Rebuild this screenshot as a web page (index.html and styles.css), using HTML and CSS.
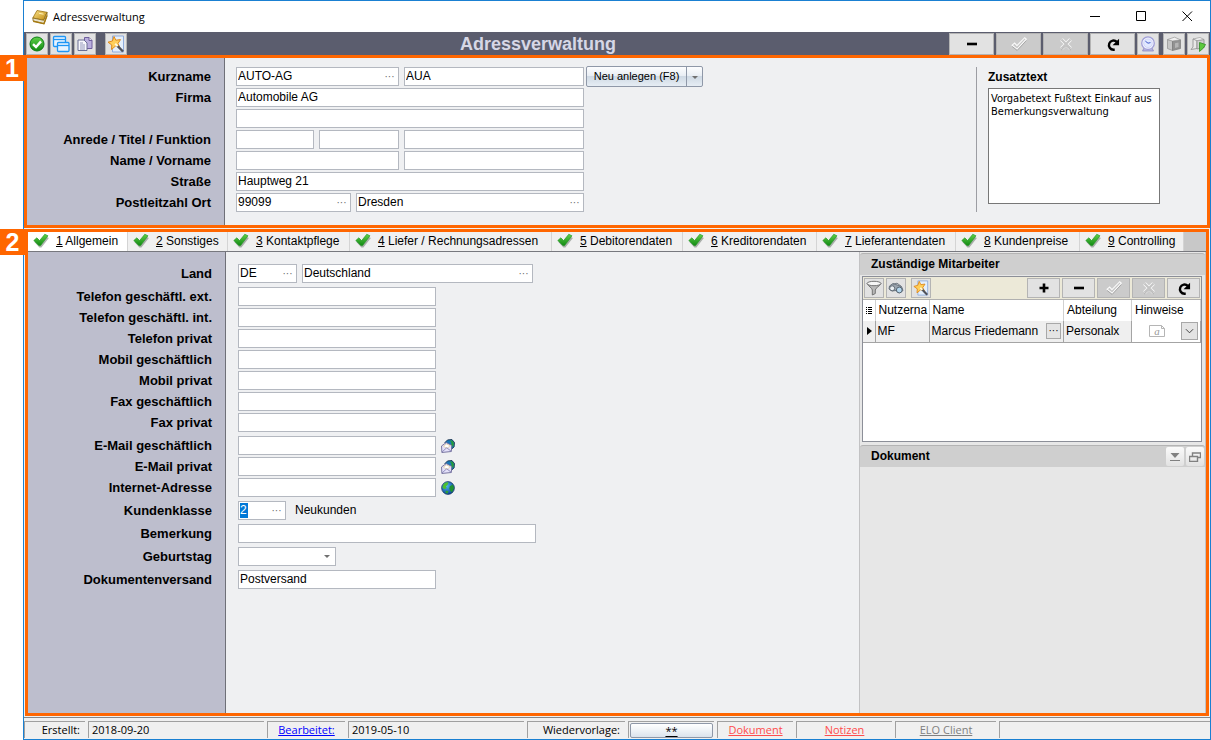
FILE: index.html
```html
<!DOCTYPE html>
<html lang="de">
<head>
<meta charset="utf-8">
<title>Adressverwaltung</title>
<link rel="stylesheet" href="styles.css">
</head>
<body>
<svg class="sprite" aria-hidden="true">
  <defs>
    <linearGradient id="g-green" x1="0" y1="0" x2="0" y2="1"><stop offset="0" stop-color="#5fd04a"/><stop offset="1" stop-color="#128a12"/></linearGradient>
    <linearGradient id="g-gold" x1="0" y1="0" x2="1" y2="1"><stop offset="0" stop-color="#fbe38a"/><stop offset="1" stop-color="#c08a10"/></linearGradient>
    <radialGradient id="g-globe" cx=".4" cy=".35" r=".7"><stop offset="0" stop-color="#4db4f0"/><stop offset="1" stop-color="#0a3f94"/></radialGradient>
  </defs>
  <symbol id="i-check" viewBox="0 0 16 16"><path d="M1 8 4.500 5.500 7 8.500 12 2.300 15.500 4 8 13.500 6 13.500Z" fill="#707870" opacity=".55" transform="translate(.4 1)"/><path d="M.8 7.500 3.800 4.800 6.600 7.600 11.800 1.200 15 2.800 7.600 12.600 5.800 12.600Z" fill="url(#g-green)" stroke="#1c9420" stroke-width=".6"/></symbol>
  <symbol id="i-ok" viewBox="0 0 16 16"><circle cx="8" cy="8" r="7" fill="url(#g-green)" stroke="#0d7d16"/><path d="M4 8.200 7 11 12 5.400" fill="none" stroke="#fff" stroke-width="2.400"/></symbol>
  <symbol id="i-windows" viewBox="0 0 18 18"><g fill="#e8f4ff" stroke="#1e96f5" stroke-width="1.300"><rect x="1.500" y="1.500" width="12" height="10" rx="1"/><path d="M1.500 4.500h12"/><rect x="5.500" y="7.500" width="11.500" height="9" rx="1"/><path d="M5.500 10.500h11.500"/></g></symbol>
  <symbol id="i-docs" viewBox="0 0 16 16"><path d="M7.500 1.500h4.500l3 3v8H7.500z" fill="#b9aede" stroke="#6e5f9c"/><path d="M12 1.500v3h3" fill="#eee" stroke="#6e5f9c"/><path d="M1 4h6l3 3v7.500H1z" fill="#f7f7fc" stroke="#6a6f94"/><path d="M3 7h3M3 9h5M3 11h5M3 13h5" stroke="#7d84ac" stroke-width=".8"/></symbol>
  <symbol id="i-wizard" viewBox="0 0 18 18"><path d="M5.500 1h11v16h-11z" fill="#e4effc" stroke="#8fabdc"/><path d="M7 1.500 8.800 5.200 13.500 4.600 11 8.500 13 12.500 8.600 11 4.500 14.500 4.800 10 1 7.200 5.400 6Z" fill="#ffcf5a" stroke="#e08a1c"/><path d="M10 10.500 16 16.500" stroke="#50525a" stroke-width="2.400"/><path d="M8.200 8.800 10.600 11.200" stroke="#fff8dc" stroke-width="2"/></symbol>
  <symbol id="i-book" viewBox="0 0 16 16"><path d="M.8 9 5 1.500 15 3.300 11.700 11.300Z" fill="url(#g-gold)" stroke="#9a7212" stroke-width=".8"/><path d="M.8 9 11.700 11.300 15 3.300V6.500L12 14.800 1.200 12Z" fill="#e9e3cc" stroke="#86640e" stroke-width=".8"/><path d="M1.200 12.200 12 14.600 15 6.500" fill="none" stroke="#a67a10" stroke-width="1.400"/><path d="M7 4.300 11.500 5.200" stroke="#fff3b8"/></symbol>
  <symbol id="i-minus" viewBox="0 0 12 12"><path d="M1 6h10" stroke="#000" stroke-width="2.600"/></symbol>
  <symbol id="i-plus" viewBox="0 0 12 12"><path d="M1.500 6h9M6 1.500v9" stroke="#000" stroke-width="2.600"/></symbol>
  <symbol id="i-tick" viewBox="0 0 14 14"><path d="M1 8 3.200 6.200 5.200 8.400 12 1.500 13.400 2.800 5.400 11.500Z" fill="#c6c6c6" stroke="#fafafa"/><path d="M1 9.200 5.400 12.600 13.400 4" fill="none" stroke="#9c9c9c" stroke-width=".7"/></symbol>
  <symbol id="i-cross" viewBox="0 0 14 14"><path d="M2.500 2.500 11.500 11.500M11.500 2.500 2.500 11.500" stroke="#fafafa" stroke-width="3.800"/><path d="M2.500 2.500 11.500 11.500M11.500 2.500 2.500 11.500" stroke="#c4c4c4" stroke-width="2.200"/><path d="M2 13.200 7 9 12 13.200" stroke="#a2a2a2" stroke-width=".6" fill="none"/></symbol>
  <symbol id="i-redo" viewBox="0 0 14 14"><path d="M8.500 12H7.500A4 4 0 1 1 10.300 5.200" fill="none" stroke="#000" stroke-width="2.100"/><path d="M12.300 2.500v5.700H6.600Z" fill="#000"/></symbol>
  <symbol id="i-clock" viewBox="0 0 16 16"><path d="M4 12 2.500 15h11L12 12Z" fill="#b6b4dc" stroke="#8380bd" stroke-width=".7"/><circle cx="8" cy="7.200" r="6.300" fill="#f1f4ff" stroke="#a19fd8" stroke-width="1.300"/><circle cx="8" cy="7.200" r="4.300" fill="#e2e9ff" stroke="#c3c6ee" stroke-width=".6"/><path d="M5.400 5.200 8 7.200 10.500 6.600" stroke="#3f58c8" fill="none"/></symbol>
  <symbol id="i-box" viewBox="0 0 16 16"><path d="M1.500 3.500 6.500 5v9.500L1.500 12.500Z" fill="#c6c6c6" stroke="#8c8c8c" stroke-width=".7"/><path d="M6.500 5 14.500 3.800v8.700L6.500 14.500Z" fill="#929292" stroke="#7a7a7a" stroke-width=".7"/><path d="M1.500 3.500 8.500 1.200 14.500 3.800 6.500 5Z" fill="#f0f0f0" stroke="#999" stroke-width=".7"/><path d="M9 7.200 12.500 6.500v4.500L9 12z" fill="#b5b5b5"/></symbol>
  <symbol id="i-boxgo" viewBox="0 0 16 16"><path d="M3 3 7 4.500v8L1 13.500 3 11Z" fill="#e8e8e8" stroke="#8c8c8c" stroke-width=".8"/><path d="M7 4.500 14 3.500v8L7 13Z" fill="#d0d0d0" stroke="#8c8c8c" stroke-width=".8"/><path d="M3 3 10 1.500 14 3.500 7 4.500Z" fill="#f5f5f5" stroke="#999" stroke-width=".7"/><path d="M9.500 6.500 15.500 8.500 13.500 12 9.500 15.500Z" fill="#5cc93e" stroke="#2d8a22" stroke-width=".8"/></symbol>
  <symbol id="i-globe" viewBox="0 0 16 16"><circle cx="8" cy="8" r="7.300" fill="url(#g-globe)" stroke="#0b2c5c" stroke-width=".8"/><path d="M2.500 4.500C4 2 6.500 1.200 8.500 1.600L7.500 4.500 5.500 6 6.500 8 4 9.500 1.500 7.500Z" fill="#4cbf30"/><path d="M10 6 13.500 4 15 8 12.500 13 10.500 11 9.500 8.500Z" fill="#1f9133"/><path d="M5.500 11 8.500 11.500 7.500 14.500 5 13.500Z" fill="#2f9f38"/></symbol>
  <symbol id="i-mail" viewBox="0 0 16 16"><path d="M4.500 4 7.500 1 12.500.6 15.400 4 15 9 11 12.500Z" fill="#1877b8" stroke="#0a2440" stroke-width=".9"/><path d="M10 1.500 13 2 14.800 4.500 14 9 11.500 7 12 4.500Z" fill="#259a3c"/><path d="M.6 8 6 4 12.300 7.300 11.800 14.300 1 15.400Z" fill="#e4e1fa" stroke="#6a6796"/><path d="M2.800 8.200 6.300 5.700 10.600 7.800 6.800 10.600Z" fill="#fff" stroke="#dcc27c" stroke-width=".6"/><path d="M1 15 6.500 10 11.700 14" fill="none" stroke="#8582b4"/></symbol>
  <symbol id="i-funnel" viewBox="0 0 16 16"><path d="M1 3.500C2 6 6.300 8 6.300 10V15L9.300 13.500V10C9.300 8 14 6 15 3.500Z" fill="#b8b8b8" stroke="#6a6a6a" stroke-width=".9"/><ellipse cx="8" cy="3.500" rx="7" ry="2.200" fill="#f6f6f6" stroke="#777"/></symbol>
  <symbol id="i-binocular" viewBox="0 0 16 16"><path d="M1.500 6 5 3.500 13.500 6.500 15 10.500 11 13 8 10.500 4 11 1 9Z" fill="#9aa4ae" stroke="#626c76" stroke-width=".9"/><circle cx="4.200" cy="8.300" r="2.500" fill="#e9eef2" stroke="#606a74"/><circle cx="11.300" cy="10" r="2.900" fill="#b4d7ee" stroke="#55636f"/><path d="M5 4.200 9 3.200 13.500 6.500" fill="none" stroke="#737c86"/></symbol>
  <symbol id="i-note" viewBox="0 0 16 14"><path d="M.5 1.500h12l3 3v8H.5z" fill="#fff" stroke="#b5b5b5"/><path d="M12.500 1.500v3h3" fill="none" stroke="#b5b5b5"/></symbol>
</svg>

<div class="page">
<main class="window">
  <header class="titlebar">
    <svg class="icon"><use href="#i-book"/></svg>
    <span class="caption">Adressverwaltung</span>
    <button class="winbtn" aria-label="Minimieren"><svg class="glyph" viewBox="0 0 11 11"><path d="M0 5.500h10"/></svg></button>
    <button class="winbtn" aria-label="Maximieren"><svg class="glyph" viewBox="0 0 11 11"><path d="M.5 .5h9v9h-9z"/></svg></button>
    <button class="winbtn" aria-label="Schließen"><svg class="glyph" viewBox="0 0 11 11"><path d="M.5 .5 10 10M10 .5 .5 10"/></svg></button>
  </header>

  <div class="toolbar">
    <div class="group">
      <button class="tool" aria-label="Übernehmen"><svg class="icon"><use href="#i-ok"/></svg></button>
      <button class="tool" aria-label="Fenster"><svg class="icon large"><use href="#i-windows"/></svg></button>
      <button class="tool" aria-label="Kopieren"><svg class="icon"><use href="#i-docs"/></svg></button>
    </div>
    <div class="group apart"><button class="tool" aria-label="Assistent"><svg class="icon large"><use href="#i-wizard"/></svg></button></div>
    <h1 class="heading">Adressverwaltung</h1>
    <div class="group">
      <button class="tool wide" aria-label="Löschen"><svg class="icon small"><use href="#i-minus"/></svg></button>
      <button class="tool wide" disabled aria-label="Speichern"><svg class="icon"><use href="#i-tick"/></svg></button>
      <button class="tool wide" disabled aria-label="Verwerfen"><svg class="icon medium"><use href="#i-cross"/></svg></button>
      <button class="tool wide" aria-label="Aktualisieren"><svg class="icon"><use href="#i-redo"/></svg></button>
      <button class="tool" aria-label="Wiedervorlage"><svg class="icon"><use href="#i-clock"/></svg></button>
    </div>
    <div class="group">
      <button class="tool" aria-label="Archiv"><svg class="icon"><use href="#i-box"/></svg></button>
      <button class="tool" aria-label="Archiv starten"><svg class="icon"><use href="#i-boxgo"/></svg></button>
    </div>
  </div>

  <section class="frame master">
    <span class="badge">1</span>
    <form class="form">
      <div class="row"><label for="kurz">Kurzname</label>
        <span class="field w163"><input id="kurz" value="AUTO-AG"><button type="button" class="lookup" aria-label="Auswahl">···</button></span>
        <span class="field w180"><input aria-label="Kürzel" value="AUA"></span>
        <span class="split"><button type="button" class="main">Neu anlegen (F8)</button><button type="button" class="drop" aria-label="Mehr"><i class="arrow"></i></button></span></div>
      <div class="row"><label for="firma">Firma</label><span class="field w348"><input id="firma" value="Automobile AG"></span></div>
      <div class="row"><label for="firma2"></label><span class="field w348"><input id="firma2" aria-label="Firma Zusatz"></span></div>
      <div class="row"><label for="anrede">Anrede / Titel / Funktion</label><span class="field w78"><input id="anrede"></span><span class="field w80"><input aria-label="Titel"></span><span class="field w180"><input aria-label="Funktion"></span></div>
      <div class="row"><label for="name">Name / Vorname</label><span class="field w163"><input id="name"></span><span class="field w180"><input aria-label="Vorname"></span></div>
      <div class="row"><label for="str">Straße</label><span class="field w348"><input id="str" value="Hauptweg 21"></span></div>
      <div class="row"><label for="plz">Postleitzahl Ort</label><span class="field w115"><input id="plz" value="99099"><button type="button" class="lookup" aria-label="Auswahl">···</button></span><span class="field w228"><input aria-label="Ort" value="Dresden"><button type="button" class="lookup" aria-label="Auswahl">···</button></span></div>
    </form>
    <aside class="extra">
      <label for="zusatz">Zusatztext</label>
      <textarea id="zusatz">Vorgabetext Fußtext Einkauf aus Bemerkungsverwaltung</textarea>
    </aside>
  </section>

  <section class="frame detail">
    <span class="badge">2</span>
    <nav class="tabs" role="tablist">
      <button class="tab active" role="tab" aria-selected="true"><svg class="icon"><use href="#i-check"/></svg><span><u>1</u> Allgemein</span></button>
      <button class="tab" role="tab"><svg class="icon"><use href="#i-check"/></svg><span><u>2</u> Sonstiges</span></button>
      <button class="tab" role="tab"><svg class="icon"><use href="#i-check"/></svg><span><u>3</u> Kontaktpflege</span></button>
      <button class="tab" role="tab"><svg class="icon"><use href="#i-check"/></svg><span><u>4</u> Liefer / Rechnungsadressen</span></button>
      <button class="tab" role="tab"><svg class="icon"><use href="#i-check"/></svg><span><u>5</u> Debitorendaten</span></button>
      <button class="tab" role="tab"><svg class="icon"><use href="#i-check"/></svg><span><u>6</u> Kreditorendaten</span></button>
      <button class="tab" role="tab"><svg class="icon"><use href="#i-check"/></svg><span><u>7</u> Lieferantendaten</span></button>
      <button class="tab" role="tab"><svg class="icon"><use href="#i-check"/></svg><span><u>8</u> Kundenpreise</span></button>
      <button class="tab" role="tab"><svg class="icon"><use href="#i-check"/></svg><span><u>9</u> Controlling</span></button>
    </nav>
    <div class="body">
      <form class="form">
        <div class="row last"><label for="land">Land</label><span class="field w59"><input id="land" value="DE"><button type="button" class="lookup" aria-label="Auswahl">···</button></span><span class="field w231"><input aria-label="Landname" value="Deutschland"><button type="button" class="lookup" aria-label="Auswahl">···</button></span></div>
        <div class="row"><label for="t1">Telefon geschäftl. ext.</label><span class="field w198"><input id="t1"></span></div>
        <div class="row"><label for="t2">Telefon geschäftl. int.</label><span class="field w198"><input id="t2"></span></div>
        <div class="row"><label for="t3">Telefon privat</label><span class="field w198"><input id="t3"></span></div>
        <div class="row"><label for="t4">Mobil geschäftlich</label><span class="field w198"><input id="t4"></span></div>
        <div class="row"><label for="t5">Mobil privat</label><span class="field w198"><input id="t5"></span></div>
        <div class="row"><label for="t6">Fax geschäftlich</label><span class="field w198"><input id="t6"></span></div>
        <div class="row last"><label for="t7">Fax privat</label><span class="field w198"><input id="t7"></span></div>
        <div class="row"><label for="e1">E-Mail geschäftlich</label><span class="field w198"><input id="e1"></span><button type="button" class="plain" aria-label="E-Mail senden"><svg class="icon medium"><use href="#i-mail"/></svg></button></div>
        <div class="row"><label for="e2">E-Mail privat</label><span class="field w198"><input id="e2"></span><button type="button" class="plain" aria-label="E-Mail senden"><svg class="icon medium"><use href="#i-mail"/></svg></button></div>
        <div class="row last"><label for="e3">Internet-Adresse</label><span class="field w198"><input id="e3"></span><button type="button" class="plain" aria-label="Webseite öffnen"><svg class="icon medium"><use href="#i-globe"/></svg></button></div>
        <div class="row last"><label for="kk">Kundenklasse</label><span class="field w48"><input id="kk" class="selected" value="2"><button type="button" class="lookup" aria-label="Auswahl">···</button></span><span class="hint">Neukunden</span></div>
        <div class="row last"><label for="bem">Bemerkung</label><span class="field w298"><input id="bem"></span></div>
        <div class="row last"><label for="geb">Geburtstag</label><span class="field w98"><input id="geb"><button type="button" class="lookup" aria-label="Kalender"><i class="arrow"></i></button></span></div>
        <div class="row"><label for="dok">Dokumentenversand</label><span class="field w198"><input id="dok" value="Postversand"></span></div>
      </form>

      <aside class="side">
        <h2 class="sidehead">Zuständige Mitarbeiter</h2>
        <div class="grid">
          <div class="gridbar">
            <button class="tool" aria-label="Filter"><svg class="icon"><use href="#i-funnel"/></svg></button>
            <button class="tool" aria-label="Suchen"><svg class="icon"><use href="#i-binocular"/></svg></button>
            <button class="tool wizard" aria-label="Assistent"><svg class="icon"><use href="#i-wizard"/></svg></button>
            <span class="spacer"></span>
            <button class="tool wide" aria-label="Hinzufügen"><svg class="icon small"><use href="#i-plus"/></svg></button>
            <button class="tool wide" aria-label="Entfernen"><svg class="icon small"><use href="#i-minus"/></svg></button>
            <button class="tool wide" disabled aria-label="Speichern"><svg class="icon"><use href="#i-tick"/></svg></button>
            <button class="tool wide" disabled aria-label="Verwerfen"><svg class="icon medium"><use href="#i-cross"/></svg></button>
            <button class="tool wide" aria-label="Aktualisieren"><svg class="icon"><use href="#i-redo"/></svg></button>
          </div>
          <table class="staff">
            <colgroup><col class="c-mark"><col class="c-user"><col><col class="c-dept"><col class="c-note"></colgroup>
            <thead><tr><th><svg class="list" viewBox="0 0 7 9"><path d="M0 1.500h1M0 3.500h1M0 5.500h1M0 7.500h1M2 1.500h4M2 3.500h4M2 5.500h4M2 7.500h4" stroke="#000"/></svg></th><th>Nutzerna</th><th>Name</th><th>Abteilung</th><th>Hinweise</th></tr></thead>
            <tbody><tr>
              <td><i class="pointer"></i></td><td>MF</td>
              <td><div class="cell"><span>Marcus Friedemann</span><button class="cellbtn" aria-label="Auswahl">···</button></div></td>
              <td>Personalx</td>
              <td class="notes"><div class="cell"><span class="note"><svg class="notebg"><use href="#i-note"/></svg><em>a</em></span><button class="cellbtn tall" aria-label="Öffnen"><svg class="chev" viewBox="0 0 10 6"><path d="M1 1 5 5 9 1"/></svg></button></div></td>
            </tr></tbody>
          </table>
        </div>
        <div class="sidehead doc"><h2>Dokument</h2>
          <button class="mini" aria-label="Einklappen"><svg viewBox="0 0 12 10"><path d="M1.500 1h9L6 6Z" fill="#808080"/><path d="M1 8.500h10" stroke="#808080"/></svg></button>
          <button class="mini" aria-label="Wiederherstellen"><svg viewBox="0 0 12 10"><path d="M3.500 4V1h8v4.500H9M.5 4.500h8v5h-8z" fill="none" stroke="#808080" stroke-width="1.400"/></svg></button>
        </div>
      </aside>
    </div>
  </section>

  <footer class="status">
    <span class="slot s61 end">Erstellt:</span>
    <span class="slot s176">2018-09-20</span>
    <span class="slot s78 mid"><a href="#bearbeitet">Bearbeitet:</a></span>
    <span class="slot s176">2019-05-10</span>
    <span class="slot s98 end">Wiedervorlage:</span>
    <span class="slot s86 mid"><button class="star"><u>**</u></button></span>
    <span class="slot s76 mid"><a class="red" href="#dokument">Dokument</a></span>
    <span class="slot s96 mid"><a class="red" href="#notizen">Notizen</a></span>
    <span class="slot s101 mid"><a class="gray" href="#elo">ELO Client</a></span>
    <span class="slot rest"></span>
  </footer>
</main>
</div>
</body>
</html>
```

FILE: styles.css
```css
* { box-sizing: border-box; }

body {
  margin: 0;
  background: #fff;
  color: #000;
  font: 12px/15px "Liberation Sans", Arial, sans-serif;
}

button, input, textarea {
  margin: 0;
  padding: 0;
  border: 0;
  color: inherit;
  font: inherit;
}

h1, h2 { margin: 0; }

.sprite { display: block; width: 0; height: 0; position: absolute; }
.icon { display: block; flex: none; width: 16px; height: 16px; }
.icon.large { width: 18px; height: 18px; }
.icon.medium { width: 14px; height: 14px; }
.icon.small { width: 12px; height: 12px; }

.page { display: flex; min-height: 100vh; padding-left: 23px; }

.window {
  flex: 1;
  display: flex;
  flex-direction: column;
  min-width: 0;
  border: 1px solid #1a80d2;
  background: #f0f0f0;
}

/* Title bar */
.titlebar {
  display: flex;
  align-items: center;
  height: 31px;
  padding-left: 8px;
  background: #fff;
  font: 11px/16px "Open Sans", "Noto Sans", sans-serif;
}
.caption { flex: 1; padding-left: 5px; }
.winbtn {
  display: flex;
  align-items: center;
  justify-content: center;
  width: 46px;
  height: 28px;
  background: none;
}
.glyph { width: 11px; height: 11px; fill: none; stroke: #000; }

/* Tool bars */
.toolbar {
  display: flex;
  align-items: center;
  gap: 4px;
  height: 23px;
  padding: 0 1px 0 2px;
  background: #5b5d6e;
}
.group { display: flex; gap: 2px; }
.group.apart { padding-left: 5px; }
.tool {
  display: flex;
  align-items: center;
  justify-content: center;
  width: 22px;
  height: 22px;
  border: 1px solid #b4b4b4;
  background: #e2e2e2;
}
.tool.wide { width: 45px; }
.tool:disabled { background: #cbcbcb; }
.heading {
  flex: 1;
  color: #d6d7e6;
  font-size: 18px;
  line-height: 22px;
  text-align: center;
}

/* Highlighted areas */
.frame {
  position: relative;
  display: flex;
  border: 3px solid #ff6600;
  background: #eff0f2;
}
.badge {
  position: absolute;
  top: -3px;
  left: -27px;
  width: 24px;
  height: 26px;
  background: #ff6600;
  color: #fff;
  font: bold 25px/26px "Liberation Sans", Arial, sans-serif;
  text-align: center;
}
.detail .badge { left: -28px; width: 25px; }

.form {
  flex: 1;
  display: flex;
  flex-direction: column;
  gap: 2px;
  min-width: 0;
  padding: 9px 0 13px;
  background: linear-gradient(to right, #bdbecd 197px, #6f7078 197px, #6f7078 198px, #eff0f2 198px);
}
.row { display: flex; align-items: center; gap: 5px; height: 19px; }
.row.last { margin-bottom: 2px; }
.row label {
  flex: none;
  width: 204px;
  padding-right: 20px;
  font-size: 13px;
  font-weight: bold;
  text-align: right;
}
.detail .row label { width: 205px; padding-right: 21px; }

.field {
  display: flex;
  flex: none;
  height: 19px;
  border: 1px solid #b4b8c0;
  background: #fff;
}
.field input {
  flex: 1;
  width: 0;
  min-width: 0;
  padding-left: 1px;
  background: none;
  outline: none;
}
.field input.selected {
  background: linear-gradient(#0078d7, #0078d7) 1px 1px / 8px 15px no-repeat;
  color: #fff;
}
.lookup {
  width: 17px;
  background: none;
  color: #666;
  font-size: 10px;
  line-height: 14px;
}
.arrow {
  display: inline-block;
  border: 3px solid transparent;
  border-top-color: #707070;
  border-bottom: 0;
  vertical-align: middle;
}
.w48 { width: 48px; }
.w59 { width: 59px; }
.w78 { width: 78px; }
.w80 { width: 80px; }
.w98 { width: 98px; }
.w115 { width: 115px; }
.w163 { width: 163px; }
.w180 { width: 180px; }
.w198 { width: 198px; }
.w228 { width: 228px; }
.w231 { width: 231px; }
.w298 { width: 298px; }
.w348 { width: 348px; }
.hint { padding-left: 4px; }
.plain { background: none; }

.split {
  display: flex;
  height: 21px;
  margin-left: -3px;
  border: 1px solid #8f98a8;
  border-radius: 2px;
  background: linear-gradient(#fdfdfe, #e9eef4 45%, #cfd9e4 50%, #e6edf4);
}
.split button { background: none; font-size: 11px; }
.split .main { width: 99px; }
.split .drop { width: 16px; border-left: 1px solid #8f98a8; }

.extra {
  flex: none;
  width: 231px;
  margin: 9px 0 13px;
  padding-left: 11px;
  border-left: 1px solid #9c9da3;
}
.extra label {
  display: block;
  padding: 3px 0;
  font-weight: bold;
}
.extra textarea {
  display: block;
  width: 172px;
  height: 116px;
  padding: 3px 2px;
  border: 1px solid #777;
  background: #fff;
  font: 11px/13px "DejaVu Sans Condensed", "DejaVu Sans", sans-serif;
  resize: none;
}

/* Detail area */
.detail {
  flex: 1;
  flex-direction: column;
  margin: 1px 1px 0 1px;
}
.tabs {
  display: grid;
  grid-template-columns: 100px 100px 122px 202px 131px 134px 139px 124px 104px;
  height: 20px;
  border-bottom: 1px solid #77787e;
  background: #c8c8c8;
}
.tab {
  display: flex;
  align-items: center;
  gap: 7px;
  padding-left: 5px;
  border-right: 1px solid #d4d4d4;
  background: #f0f0f0;
  white-space: nowrap;
}
.tab .icon { margin-bottom: 2px; }
.tab.active { background: #fff; }
.body { flex: 1; display: flex; }
.detail .form { padding-top: 12px; }

.side {
  flex: none;
  display: flex;
  flex-direction: column;
  width: 347px;
  padding: 1px 0 0;
  border: solid #c2c2c4;
  border-width: 0 1px;
  background: #e7e7e7;
}
.sidehead {
  display: flex;
  align-items: center;
  height: 22px;
  padding-left: 11px;
  border-top: 1px solid #b4b4b4;
  border-radius: 3px 3px 0 0;
  background: #cfcfcf;
  font-size: 12px;
}
.sidehead h2 { flex: 1; font-size: 12px; }
.sidehead.doc { padding-right: 1px; }
.mini {
  width: 18px;
  height: 19px;
  margin-left: 2px;
  border-radius: 2px;
  background: linear-gradient(#fafafa, #e2e2e2);
}
.mini svg { display: block; width: 12px; height: 10px; margin: auto; }

.grid {
  height: 166px;
  margin: 1px 3px 3px 2px;
  border: 1px solid #8c8f98;
  background: #fff;
}
.gridbar {
  display: flex;
  align-items: center;
  gap: 2px;
  height: 23px;
  padding: 0 1px;
  border-bottom: 1px solid #b0b0b0;
  background: #ece9d8;
}
.gridbar .tool { width: 20px; height: 20px; }
.gridbar .tool.wide { width: 33px; }
.gridbar .wizard { margin-left: 3px; }
.spacer { flex: 1; }

.staff {
  width: 100%;
  table-layout: fixed;
  border-collapse: collapse;
}
.c-mark { width: 12px; }
.c-user { width: 54px; }
.c-dept { width: 68px; }
.c-note { width: 69px; }
.staff th, .staff td {
  height: 21px;
  padding: 0 0 0 2px;
  border-right: 1px solid #d0d0d0;
  overflow: hidden;
  font-weight: normal;
  text-align: left;
  white-space: nowrap;
}
.staff th { padding-left: 3px; }
.staff td { border-right-color: #a4a4a4; border-bottom: 1px solid #a4a4a4; background: #efefef; }
.staff td.notes { background: #fff; }
.list { display: block; width: 7px; height: 9px; }
.pointer {
  display: block;
  width: 0;
  margin-left: 2px;
  border: 4px solid transparent;
  border-left: 5px solid #000;
  border-right: 0;
}
.cell { display: flex; align-items: center; justify-content: space-between; padding-right: 2px; }
.cellbtn {
  width: 15px;
  height: 16px;
  border: 1px solid #a8a8a8;
  background: #e4e4e4;
  font-size: 10px;
  line-height: 12px;
}
.cellbtn.tall { width: 17px; height: 18px; }
.chev { display: block; width: 9px; height: 6px; margin: auto; fill: none; stroke: #333; }
.note {
  display: grid;
  place-items: center;
  width: 16px;
  margin-left: 15px;
  color: #999;
  font: italic 11px/14px "Liberation Serif", serif;
}
.note > * { grid-area: 1 / 1; }
.notebg { width: 16px; height: 14px; }

/* Status bar */
.status {
  display: flex;
  gap: 3px;
  margin-top: 1px;
  padding: 3px 0 1px;
  border-top: 1px solid #85868a;
  font: 11px/16px "Open Sans", "Noto Sans", sans-serif;
}
.slot {
  flex: none;
  height: 17px;
  padding: 0 3px;
  border: solid #a0a0a0;
  border-width: 1px 0 0 1px;
  white-space: nowrap;
}
.slot.end { padding-right: 5px; text-align: right; }
.slot.mid { text-align: center; }
.slot.rest { flex: 1; }
.s61 { width: 61px; }
.s76 { width: 76px; }
.s78 { width: 78px; }
.s86 { width: 86px; }
.s96 { width: 96px; }
.s98 { width: 98px; }
.s101 { width: 101px; }
.s176 { width: 176px; }
.slot.s86 { padding: 0 1px; }
.slot a { color: #0000ff; }
.slot a.red { color: #ff4d4d; }
.slot a.gray { color: #808080; }
.star {
  display: block;
  width: 100%;
  height: 15px;
  margin-top: 1px;
  border: 1px solid #8f98a8;
  border-radius: 2px;
  background: linear-gradient(#fff, #eef2f6 50%, #dbe3ec);
  line-height: 12px;
}
```
